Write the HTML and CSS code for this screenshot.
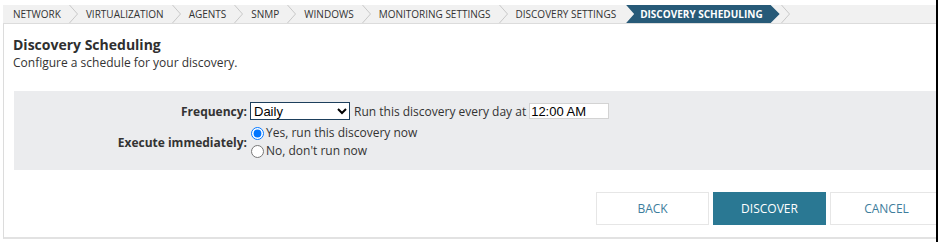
FILE: index.html
```html
<!DOCTYPE html>
<html>
<head>
	<title>Discovery Scheduling</title>
	<link rel="stylesheet" href="styles.css">
</head>
<body>
	<div class="wizard">
		<div class="steps">
			<span class="step">NETWORK</span>
			<svg class="sep" width="9" height="18" viewBox="0 0 9 18"><polyline points="0.5,0 8.5,9 0.5,18" fill="none" stroke="#c8c8c8" stroke-width="1"/></svg>
			<span class="step">VIRTUALIZATION</span>
			<svg class="sep" width="9" height="18" viewBox="0 0 9 18"><polyline points="0.5,0 8.5,9 0.5,18" fill="none" stroke="#c8c8c8" stroke-width="1"/></svg>
			<span class="step">AGENTS</span>
			<svg class="sep" width="9" height="18" viewBox="0 0 9 18"><polyline points="0.5,0 8.5,9 0.5,18" fill="none" stroke="#c8c8c8" stroke-width="1"/></svg>
			<span class="step">SNMP</span>
			<svg class="sep" width="9" height="18" viewBox="0 0 9 18"><polyline points="0.5,0 8.5,9 0.5,18" fill="none" stroke="#c8c8c8" stroke-width="1"/></svg>
			<span class="step">WINDOWS</span>
			<svg class="sep" width="9" height="18" viewBox="0 0 9 18"><polyline points="0.5,0 8.5,9 0.5,18" fill="none" stroke="#c8c8c8" stroke-width="1"/></svg>
			<span class="step">MONITORING SETTINGS</span>
			<svg class="sep" width="9" height="18" viewBox="0 0 9 18"><polyline points="0.5,0 8.5,9 0.5,18" fill="none" stroke="#c8c8c8" stroke-width="1"/></svg>
			<span class="step">DISCOVERY SETTINGS</span>
			<span class="step active">DISCOVERY SCHEDULING</span>
			<svg class="sep after" width="9" height="18" viewBox="0 0 9 18"><polyline points="0.5,0 8.5,9 0.5,18" fill="none" stroke="#c8c8c8" stroke-width="1"/></svg>
		</div>

		<div class="intro">
			<h2>Discovery Scheduling</h2>
			<p>Configure a schedule for your discovery.</p>
		</div>

		<div class="panel">
			<div class="row">
				<label class="label" for="freq">Frequency:</label>
				<div class="controls">
					<span class="select">
						<select id="freq" class="freq">
							<option>Daily</option>
							<option>Weekly</option>
							<option>Monthly</option>
						</select>
						<svg class="arrow" width="10" height="7" viewBox="0 0 10 7"><polyline points="1,1 5,5 9,1" fill="none" stroke="#000" stroke-width="2"/></svg>
					</span>
					<span class="hint">Run this discovery every day at</span>
					<input type="text" class="time" value="12:00 AM">
				</div>
			</div>
			<div class="row">
				<span class="label">Execute immediately:</span>
				<div class="radios">
					<label class="radio"><input type="radio" name="now" checked> Yes, run this discovery now</label>
					<label class="radio"><input type="radio" name="now"> No, don't run now</label>
				</div>
			</div>
		</div>

		<div class="buttons">
			<button class="btn">BACK</button>
			<button class="btn primary">DISCOVER</button>
			<button class="btn">CANCEL</button>
		</div>
	</div>
	<div class="edge"></div>
</body>
</html>
```

FILE: styles.css
```css
*{
	padding: 0px;
	margin: 0px;
	box-sizing: border-box;
}
body{
	font-family: "Open Sans", "Liberation Sans", sans-serif;
	color: #333;
	background: #fff;
	width: 938px;
	height: 242px;
	overflow: hidden;
	padding-top: 5px;
}
.wizard{
	margin-left: 3px;
	width: 944px;
	border-left: 1px solid #dcdcdc;
	border-bottom: 2px solid #e2e2e2;
}
.steps{
	display: flex;
	align-items: center;
	height: 19px;
	background: #f1f1f1;
	border-bottom: 1px solid #dcdcdc;
	margin-left: -1px;
	padding-left: 10px;
	font-size: 10px;
	color: #333;
}
.step{
	line-height: 18px;
	white-space: nowrap;
}
.sep{
	margin: 0 8px;
	flex-shrink: 0;
}
.sep.after{
	margin-left: 1px;
}
.step.active{
	margin-left: 10px;
	background: #275a78;
	color: #fff;
	font-weight: bold;
	padding: 0 17px 0 14px;
	height: 18px;
	clip-path: polygon(0 0, calc(100% - 9px) 0, 100% 50%, calc(100% - 9px) 100%, 0 100%, 8px 50%);
}
.intro{
	padding: 12px 0 0 9px;
}
.intro h2{
	font-size: 14px;
	font-weight: bold;
	line-height: 18px;
	color: #2f2f2f;
}
.intro p{
	font-size: 12px;
	line-height: 18px;
	color: #333;
}
.panel{
	margin: 19px 0 0 10px;
	background: #ebecee;
	height: 79px;
	padding-top: 11px;
}
.row{
	display: grid;
	grid-template-columns: 233px auto;
	column-gap: 3px;
	align-items: center;
	margin-bottom: 4px;
}
.label{
	text-align: right;
	font-weight: bold;
	font-size: 12px;
	color: #333;
}
.controls{
	display: flex;
	align-items: center;
	font-size: 12px;
}
.select{
	position: relative;
	display: inline-flex;
}
.freq{
	appearance: none;
	-webkit-appearance: none;
	width: 100px;
	height: 18px;
	border: 1px solid #1d3f5c;
	border-radius: 0;
	background: #fff;
	font-family: "Liberation Sans", Arial, sans-serif;
	font-size: 13px;
	color: #000;
	padding-left: 3px;
	outline: none;
}
.arrow{
	position: absolute;
	right: 3px;
	top: 6px;
	pointer-events: none;
}
.hint{
	margin: 0 3px 0 4px;
	color: #333;
}
.time{
	width: 80px;
	height: 16px;
	border: 1px solid #d3d3d3;
	background: #fff;
	font-family: "Liberation Sans", Arial, sans-serif;
	font-size: 13px;
	color: #000;
	padding-left: 1px;
	outline: none;
}
.radios{
	display: flex;
	flex-direction: column;
	font-size: 12px;
}
.radio{
	display: flex;
	align-items: center;
	line-height: 18px;
}
.radio input{
	width: 13px;
	height: 13px;
	margin: 0 2px 0 1px;
}
.buttons{
	display: flex;
	justify-content: flex-end;
	gap: 4px;
	padding: 22px 4px 12px 0;
}
.btn{
	width: 113px;
	height: 33px;
	background: #fff;
	border: 1px solid #e6e6e6;
	color: #3d7d9c;
	font-family: "Open Sans", "Liberation Sans", sans-serif;
	font-size: 12px;
}
.btn.primary{
	background: #2a7893;
	border-color: #2a7893;
	color: #fff;
}
.edge{
	position: absolute;
	top: 0;
	left: 936px;
	width: 2px;
	height: 242px;
	background: #000;
}
```
